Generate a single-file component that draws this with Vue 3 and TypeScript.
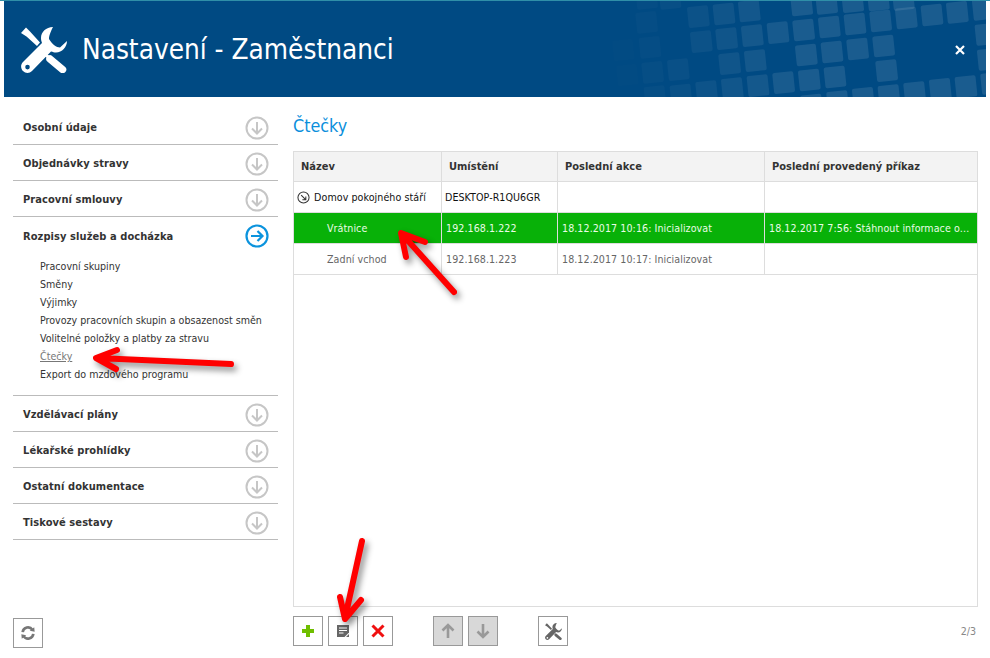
<script setup lang="ts">
const tiles: [number, number][] = [
  [905,15],[980,10],[1058,5],[1135,0],[1210,-2],[440,-5],[510,-5],[595,50],[672,42],[748,33],[440,67],
  [604,125],[680,116],[757,107],[834,98],[911,90],[988,81],[1065,72],[1142,63],[1219,54],[1296,45],[1372,37],[1450,28],
  [1458,103],[370,150],[450,142],[919,165],[996,156],[1073,147],[1151,138],[689,191],[766,182],[1465,178],
  [382,225],[458,217],[535,209],[928,240],[1005,231],[1160,212],[465,290],[543,285],[620,275],[697,266],[774,257],[851,248],
  [1090,295],[1167,287],[1244,278],[1321,268],[1398,260],[1475,250],[1013,305],[935,315],
]
const pattern = tiles.map(([zx, zy]) => {
  const x = 496 + zx / 3
  const y = zy / 3 - 1
  const opacity = Math.min(0.1, Math.max(0.006, ((zx - 340) / 540) * 0.1))
  return { x, y, opacity, t: `rotate(-6 ${x} ${y})` }
})
const before = ['Osobní údaje', 'Objednávky stravy', 'Pracovní smlouvy']
const subItems = [
  'Pracovní skupiny', 'Směny', 'Výjimky', 'Provozy pracovních skupin a obsazenost směn',
  'Volitelné položky a platby za stravu', 'Čtečky', 'Export do mzdového programu',
]
const after = ['Vzdělávací plány', 'Lékařské prohlídky', 'Ostatní dokumentace', 'Tiskové sestavy']
const wrench = 'M32 0C25 0 20 5 20 11C20 13 20.5 14.500 21 16L2 35C-1 38 0 42 2 44C4.500 46.500 8.500 46.500 11 44L30 24.500C32 25 33 25.500 35 25.500C41 25.500 46 20 46 14L39 20.500C35.500 20.500 31 17 28 12C28 9 29 6 32 0ZM6.500 37.800A2.300 2.300 0 1 0 6.510 42.400A2.300 2.300 0 1 0 6.500 37.800Z'
</script>

<template>
  <div class="page">
    <div class="topline"></div>
    <header class="head">
      <svg class="pattern" viewBox="0 0 982 96" width="982" height="96" aria-hidden="true">
        <rect v-for="(p, i) in pattern" :key="i" :x="p.x - 10.500" :y="p.y - 10.500" width="21" height="21" rx="2" fill="#fff" :fill-opacity="p.opacity" :transform="p.t" />
      </svg>
      <svg class="logo" viewBox="0 0 46 46" width="46" height="46" aria-hidden="true">
        <path :d="wrench" fill="#fff" fill-rule="evenodd" />
        <path d="M0 6L5 .5L9 4.500L19 15.500L16 19L5.500 9.500Z" fill="#fff" />
        <path d="M29 32L41.500 42.500" stroke="#fff" stroke-width="7.500" stroke-linecap="round" />
        <path d="M24 27.500L30 32" stroke="#fff" stroke-width="3" />
      </svg>
      <h1>Nastavení - Zaměstnanci</h1>
      <svg class="close" viewBox="0 0 10 10" width="10" height="10" aria-hidden="true">
        <path d="M1 1L9 9M9 1L1 9" stroke="#fff" stroke-width="2.200" />
      </svg>
    </header>

    <main class="main">
      <aside class="side">
        <nav class="menu">
          <div v-for="t in before" :key="t" class="mrow">
            <span>{{ t }}</span>
            <svg viewBox="0 0 24 24" width="24" height="24" class="ci"><circle cx="12" cy="12" r="10.500" fill="none" stroke="#c6c6c6" stroke-width="2" /><path d="M12 6V17M7 12.500L12 17.500L17 12.500" fill="none" stroke="#c6c6c6" stroke-width="2" /></svg>
          </div>
          <div class="mgroup">
            <div class="mrow open">
              <span>Rozpisy služeb a docházka</span>
              <svg viewBox="0 0 24 24" width="24" height="24" class="ci"><circle cx="12" cy="12" r="10.500" fill="none" stroke="#0b93dd" stroke-width="2.200" /><path d="M6 12H17.500M12.500 7L17.500 12L12.500 17" fill="none" stroke="#0b93dd" stroke-width="2.200" /></svg>
            </div>
            <ul class="sub">
              <li v-for="s in subItems" :key="s" :class="{ cur: s === 'Čtečky' }">{{ s }}</li>
            </ul>
          </div>
          <div v-for="t in after" :key="t" class="mrow">
            <span>{{ t }}</span>
            <svg viewBox="0 0 24 24" width="24" height="24" class="ci"><circle cx="12" cy="12" r="10.500" fill="none" stroke="#c6c6c6" stroke-width="2" /><path d="M12 6V17M7 12.500L12 17.500L17 12.500" fill="none" stroke="#c6c6c6" stroke-width="2" /></svg>
          </div>
        </nav>
        <button class="btn" aria-label="Obnovit">
          <svg viewBox="0 0 18 18" width="16" height="16"><path d="M3 8A6 6 0 0 1 14 5.500M15 10A6 6 0 0 1 4 12.500" fill="none" stroke="#777" stroke-width="3" /><path d="M11 6.500L16.500 7.500L16 2.500ZM7 11.500L1.500 10.500L2 15.500Z" fill="#777" /></svg>
        </button>
      </aside>

      <section class="content">
        <h2>Čtečky</h2>
        <div class="frame">
          <table>
            <colgroup><col class="c1" /><col class="c2" /><col class="c3" /><col /></colgroup>
            <thead>
              <tr><th>Název</th><th>Umístění</th><th>Poslední akce</th><th>Poslední provedený příkaz</th></tr>
            </thead>
            <tbody>
              <tr class="root">
                <td class="rootname">
                  <svg viewBox="0 0 14 14" width="13" height="13"><circle cx="7" cy="7" r="6" fill="none" stroke="#333" stroke-width="1.100" /><path d="M4.500 4.500L9.300 9.300M9.500 5.800V9.500H5.800" fill="none" stroke="#333" stroke-width="1.100" /></svg>
                  Domov pokojného stáří
                </td>
                <td class="pc">DESKTOP-R1QU6GR</td><td></td><td></td>
              </tr>
              <tr class="sel">
                <td class="ind">Vrátnice</td><td>192.168.1.222</td><td>18.12.2017 10:16: Inicializovat</td><td>18.12.2017 7:56: Stáhnout informace o…</td>
              </tr>
              <tr class="dim">
                <td class="ind">Zadní vchod</td><td>192.168.1.223</td><td>18.12.2017 10:17: Inicializovat</td><td></td>
              </tr>
            </tbody>
          </table>
        </div>
        <div class="tools">
          <button class="btn" aria-label="Přidat"><svg viewBox="0 0 14 14" width="14" height="14"><path d="M7 1V13M1 7H13" stroke="#6fbe00" stroke-width="4" /></svg></button>
          <button class="btn" aria-label="Upravit"><svg viewBox="0 0 14 14" width="14" height="14"><path d="M1 1H13V8.500L8.500 13H1Z" fill="#666" /><path d="M3 4H11M3 6.500H11M3 9H7.500" stroke="#fff" stroke-width="1" /><path d="M13 10V13H10Z" fill="#666" /></svg></button>
          <button class="btn" aria-label="Smazat"><svg viewBox="0 0 14 14" width="14" height="14"><path d="M1.500 1.500L12.500 12.500M12.500 1.500L1.500 12.500" stroke="#f01010" stroke-width="3" /></svg></button>
          <button class="btn off g1" aria-label="Nahoru"><svg viewBox="0 0 14 16" width="14" height="16"><path d="M7 15V2M1.500 7.500L7 2L12.500 7.500" fill="none" stroke="#999" stroke-width="2.600" /></svg></button>
          <button class="btn off" aria-label="Dolů"><svg viewBox="0 0 14 16" width="14" height="16"><path d="M7 1V14M1.500 8.500L7 14L12.500 8.500" fill="none" stroke="#999" stroke-width="2.600" /></svg></button>
          <button class="btn g2" aria-label="Nastavení">
            <svg viewBox="0 0 46 46" width="17" height="17"><path :d="wrench" fill="#666" fill-rule="evenodd" /><path d="M0 6L5 .5L9 4.500L19 15.500L16 19L5.500 9.500Z" fill="#666" /><path d="M29 32L41.500 42.500" stroke="#666" stroke-width="7.500" stroke-linecap="round" /></svg>
          </button>
          <span class="pager">2/3</span>
        </div>
      </section>
    </main>

    <svg class="arrows" viewBox="0 0 990 658" width="990" height="658" aria-hidden="true">
      <g fill="none" stroke="#f00" stroke-width="6" stroke-linecap="round" stroke-linejoin="round">
        <path d="M231 364L97 358M117 350L96 358L116 369" />
        <path d="M454 292L402 234M425 242L401 233L406 257" />
        <path d="M362 541L345 618M340 597L345 619L361 600" />
      </g>
    </svg>
  </div>
</template>

<style scoped>
.page { position: relative; width: 990px; height: 658px; overflow: hidden; background: #fff; display: flex; flex-direction: column; font-family: "DejaVu Sans Condensed", "DejaVu Sans", sans-serif; font-stretch: condensed; font-size: 10.6px; color: #333; }
.topline { height: 1px; background: #2f8fa8; flex: none; }
.head { position: relative; flex: none; height: 96px; margin: 0 4px; background: #004a83; display: flex; align-items: center; overflow: hidden; }
.pattern { position: absolute; left: 0; top: 0; }
.logo { position: relative; margin-left: 17px; margin-top: 2px; flex: none; }
.head h1 { position: relative; margin: 2px 0 0 15px; font-size: 27.7px; font-weight: 400; color: #fff; line-height: 34px; white-space: nowrap; }
.close { position: absolute; right: 21px; top: 44px; }
.main { flex: 1; display: flex; min-height: 0; }
.side { width: 265px; margin-left: 13px; display: flex; flex-direction: column; padding-top: 12px; padding-bottom: 10px; }
.menu { flex: 1; }
.mrow { height: 36px; box-sizing: border-box; border-bottom: 1px solid #bbb; display: flex; align-items: center; justify-content: space-between; padding: 2px 9px 0 10px; font-size: 11px; letter-spacing: .08px; font-weight: 700; color: #333; }
.mrow.open { border-bottom: 0; }
.mgroup { border-bottom: 1px solid #bbb; height: 179px; box-sizing: border-box; }
.sub { list-style: none; margin: 4px 0 0; padding: 0 0 0 27px; }
.sub li { height: 18px; line-height: 18px; white-space: nowrap; }
.sub li.cur { color: #777; text-decoration: underline; }
.btn { width: 30px; height: 30px; box-sizing: border-box; flex: none; border: 1px solid #999; background: #fff; padding: 0; display: flex; align-items: center; justify-content: center; }
.btn.off { background: #d8d8d8; }
.content { width: 685px; margin-left: 15px; display: flex; flex-direction: column; }
.content h2 { margin: 0; height: 54px; font-size: 17.8px; font-weight: 400; line-height: 58px; color: #0b8fdc; box-sizing: border-box; }
.frame { height: 456px; box-sizing: border-box; border: 1px solid #ddd; }
table { width: 100%; table-layout: fixed; border-collapse: separate; border-spacing: 0; }
.c1 { width: 148px; }
.c2 { width: 116px; }
.c3 { width: 207px; }
th, td { box-sizing: border-box; border-right: 1px solid #ddd; border-bottom: 1px solid #ddd; overflow: hidden; white-space: nowrap; text-align: left; font-weight: 400; }
tr th:last-child, tr td:last-child { border-right: 0; }
th { height: 30px; background: #f3f3f3; font-size: 11px; font-weight: 700; padding: 0 7px; }
td { height: 31px; padding: 0 4px; letter-spacing: .07px; }
.root td { color: #111; }
.rootname { padding-left: 3px; }
.rootname svg { vertical-align: -3px; margin-right: 1px; }
.pc { padding-left: 3px; }
.ind { padding-left: 33px; }
.sel td { background: #08b108; color: #eafbe6; }
.dim td { color: #666; }
.tools { flex: none; display: flex; align-items: center; gap: 5px; margin-top: 9px; }
.g1 { margin-left: 35px; }
.g2 { margin-left: 35px; }
.pager { margin-left: auto; margin-right: 2px; color: #888; }
.arrows { position: absolute; left: 0; top: 0; pointer-events: none; filter: drop-shadow(3px 4px 3px rgba(0,0,0,.45)); }
</style>

<style>
html, body { margin: 0; background: #fff; }
</style>
